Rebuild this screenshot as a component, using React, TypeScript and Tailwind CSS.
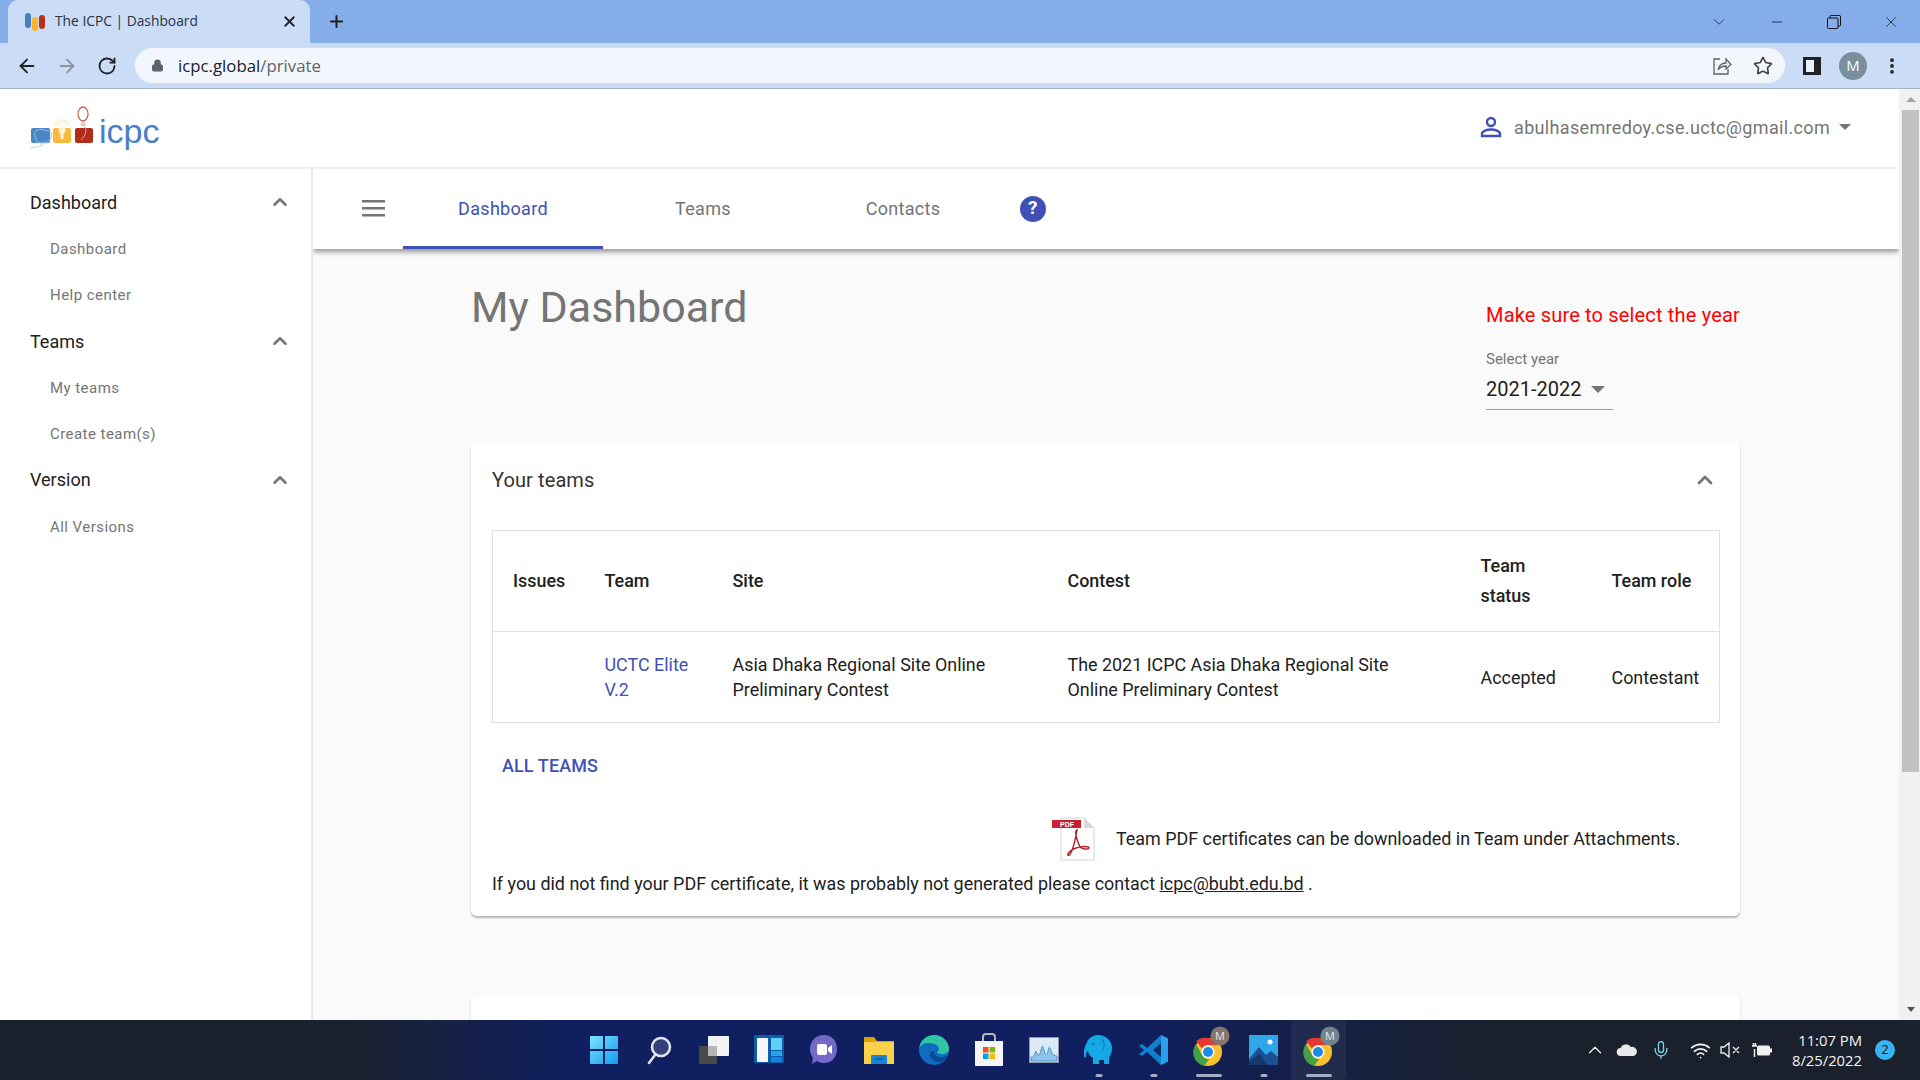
import { ChevronUp, Star, ArrowLeft, ArrowRight, RotateCw, Plus, X, Lock, Minus, EllipsisVertical, ChevronDown, Mic, Wifi } from 'lucide-react';

const sideGroups = [
  { title: 'Dashboard', items: ['Dashboard', 'Help center'] },
  { title: 'Teams', items: ['My teams', 'Create team(s)'] },
  { title: 'Version', items: ['All Versions'] },
];

function BrowserChrome() {
  return (
    <div className="shrink-0">
      <div className="h-[43px] bg-[#85ade9] flex items-end pl-2">
        <div className="w-[302px] h-[43px] mt-0 bg-[#cbdcf7] rounded-t-[10px] flex items-center pl-[16px] pr-[12px]">
          <svg width="22" height="20" viewBox="0 0 22 20" className="shrink-0">
            <rect x="1" y="1" width="6" height="15" rx="3" fill="#4a7fc4" />
            <rect x="8" y="5" width="6" height="14" rx="3" fill="#fbb72c" />
            <rect x="15" y="3" width="6" height="14" rx="3" fill="#b52f1c" />
          </svg>
          <span className="ml-[9px] font-['Open_Sans',sans-serif] text-[13.8px] text-[#2a3240] flex-1">The ICPC | Dashboard</span>
          <X size={17} strokeWidth={2.6} className="text-[#222]" />
        </div>
        <div className="w-[48px] h-[43px] flex items-center justify-center text-[#222] ml-[2px] -mr-[2px]">
          <Plus size={19} strokeWidth={2.6} />
        </div>
        <div className="flex-1" />
        <div className="h-[43px] w-[225px] flex items-center text-[#1a1a1a]">
          <div className="w-[58px] flex justify-center -ml-[5px]"><ChevronDown size={18} strokeWidth={1} /></div>
          <div className="w-[57px] flex justify-center"><Minus size={16} strokeWidth={1.2} /></div>
          <div className="w-[57px] flex justify-center">
            <svg width="14" height="14" viewBox="0 0 14 14" fill="none" stroke="#111" strokeWidth="1">
              <rect x="0.5" y="3" width="10.5" height="10.5" rx="1" />
              <path d="M3 3V1.5a1 1 0 0 1 1-1h8.5a1 1 0 0 1 1 1V10a1 1 0 0 1-1 1H11" />
            </svg>
          </div>
          <div className="w-[58px] flex justify-center"><X size={18} strokeWidth={1} /></div>
        </div>
      </div>
      <div className="h-[46px] bg-[#cbdcf7] border-b border-[#a3b3ca] flex items-center">
        <div className="w-[135px] shrink-0 flex items-center pl-[16px] gap-[18px] text-[#222]">
          <ArrowLeft size={22} strokeWidth={2} />
          <ArrowRight size={22} strokeWidth={2} className="text-[#8a93a0]" />
          <RotateCw size={20} strokeWidth={2.2} className="ml-[1px]" />
        </div>
        <div className="w-[1650px] h-[35px] rounded-full bg-[#f3f7fd] flex items-center pl-[16px]">
          <Lock size={13} fill="#5f6368" className="text-[#5f6368]" />
          <span className="ml-[14px] font-['Open_Sans',sans-serif] text-[16.8px] text-[#202124]">
            icpc.global<span className="text-[#5f6368]">/private</span>
          </span>
          <div className="flex-1" />
          <svg width="20" height="20" viewBox="0 0 20 20" fill="none" stroke="#5f6368" strokeWidth="1.3" className="mr-[21px]">
            <path d="M8 3H2v15h14v-5" />
            <path d="M6 14c1-5 4-7 8-7V3l5 5.500L14 13V10c-3 0-6 1-8 4z" />
          </svg>
          <Star size={20} strokeWidth={2} className="text-[#444] mr-[12px]" />
        </div>
        <div className="w-[55px] flex justify-center -ml-[1px]">
          <div className="w-[18px] h-[18px] border-[3px] border-[#202124] border-r-[7px] bg-[#e8f0fc]" />
        </div>
        <div className="w-[28px] h-[28px] rounded-full bg-[#78909c] text-white text-[15px] flex items-center justify-center font-['Open_Sans',sans-serif]">M</div>
        <div className="w-[50px] flex justify-center text-[#222]"><EllipsisVertical size={20} strokeWidth={2.6} /></div>
      </div>
    </div>
  );
}

function Logo() {
  return (
    <div className="flex items-end">
      <svg width="70" height="50" viewBox="0 0 70 50">
        <rect x="1" y="27" width="19" height="15" rx="2" fill="#4c86c6" />
        <path d="M6 30c4-3 10-1 15 1 2 4-1 9-5 10-4 2-10 1-10-3-2-3-2-6 0-8z" fill="none" stroke="#9cc0e2" strokeWidth="1" />
        <path d="M1 47c6-1 11-2 14-5" fill="none" stroke="#9cc0e2" strokeWidth="1" strokeDasharray="2 1" />
        <rect x="23" y="27" width="18" height="15" rx="2" fill="#fbb93a" />
        <path d="M29 31a3.500 3.500 0 1 1 6 0l-1.500 3v4h-3v-4z" fill="#fff4d0" />
        <path d="M24 21l3 3M32 18v4M40 21l-3 3M28 19l2 3M36 19l-2 3" stroke="#fbdc91" strokeWidth="1" />
        <rect x="45" y="27" width="18" height="15" rx="2" fill="#b32d1d" />
        <ellipse cx="53" cy="13" rx="5" ry="7" fill="none" stroke="#c9685b" strokeWidth="1.300" />
        <path d="M53 20l-2 4h4l-2-4zM53 24c5 4 3 10-2 15" fill="none" stroke="#e3a49a" strokeWidth="1" />
      </svg>
      <span className="font-['Liberation_Sans',sans-serif] text-[34px] leading-[38px] text-[#4a7ec9] -ml-[1px] mb-[1px]">icpc</span>
    </div>
  );
}

function Sidebar() {
  return (
    <aside className="w-[313px] shrink-0 bg-white border-r-2 border-[#e8e8e8] pt-[10px] pl-[30px] pr-[20px]">
      {sideGroups.map((g) => (
        <div key={g.title}>
          <div className="h-[46.3px] flex items-center justify-between text-[18px] text-[#212121]">
            {g.title}
            <ChevronUp size={22} strokeWidth={2.8} className="text-[#757575]" />
          </div>
          {g.items.map((i) => (
            <div key={i} className="h-[46.3px] flex items-center pl-[20px] pt-[2px] text-[15px] tracking-[0.45px] text-[#757575]">{i}</div>
          ))}
        </div>
      ))}
    </aside>
  );
}

function NavTabs() {
  return (
    <div className="h-[80px] shrink-0 bg-white shadow-[0_3px_5px_rgba(0,0,0,0.4)] flex items-stretch relative tracking-[0.3px]">
      <div className="w-[90px] flex items-center justify-center pl-[30px] pb-[2px]">
        <svg width="23" height="18" viewBox="0 0 23 18" fill="#757575">
          <rect y="1" width="23" height="2.500" />
          <rect y="8" width="23" height="2.500" />
          <rect y="15" width="23" height="2.500" />
        </svg>
      </div>
      <div className="w-[200px] flex items-center justify-center pt-[1px] text-[18px] text-[#3f51b5] border-b-[3px] border-[#3f51b5]">Dashboard</div>
      <div className="w-[200px] flex items-center justify-center text-[18px] text-[#757575] pb-[2px]">Teams</div>
      <div className="w-[200px] flex items-center justify-center text-[18px] text-[#757575] pb-[2px]">Contacts</div>
      <div className="w-[30px] ml-[15px] flex items-center justify-center pb-[1px]">
        <div className="w-[26px] h-[26px] rounded-full bg-[#3f51b5] text-white font-bold text-[19px] flex items-center justify-center">?</div>
      </div>
    </div>
  );
}

function TeamsCard() {
  const th = 'text-left font-medium text-[#212121] leading-[30px] pl-[20px] pr-[21px] border-b border-[#e0e0e0]';
  const td = 'text-left align-middle leading-[25px] pl-[20px] pr-[21px]';
  return (
    <section className="bg-white rounded-[6px] shadow-[0_2px_2px_rgba(0,0,0,0.28)] h-[475px] pt-[17px] pl-[21px] pr-[20px] text-[17.92px]">
      <div className="h-[44px] flex items-center justify-between text-[20px] tracking-[0.1px] text-[#333]">
        Your teams
        <ChevronUp size={24} strokeWidth={2.8} className="text-[#757575] mr-[3px]" />
      </div>
      <table className="mt-[28px] w-full table-fixed border border-[#e0e0e0]">
        <thead>
          <tr className="h-[101px]">
            <th className={`${th} w-[92px]`}>Issues</th>
            <th className={`${th} w-[128px]`}>Team</th>
            <th className={`${th} w-[335px]`}>Site</th>
            <th className={`${th} w-[413px]`}>Contest</th>
            <th className={`${th} w-[131px]`}>Team status</th>
            <th className={`${th}`}>Team role</th>
          </tr>
        </thead>
        <tbody className="text-[#212121]">
          <tr className="h-[91px]">
            <td className={td}></td>
            <td className={`${td} text-[#3f51b5]`}>UCTC Elite V.2</td>
            <td className={td}>Asia Dhaka Regional Site Online Preliminary Contest</td>
            <td className={td}>The 2021 ICPC Asia Dhaka Regional Site Online Preliminary Contest</td>
            <td className={td}>Accepted</td>
            <td className={`${td} pr-0`}>Contestant</td>
          </tr>
        </tbody>
      </table>
      <div className="mt-[29px] ml-[10px] font-medium tracking-[0.15px] leading-[28px] text-[#3f51b5]">ALL TEAMS</div>
      <div className="mt-[37px] ml-[560px] flex items-center">
        <svg width="44" height="44" viewBox="0 0 44 44" className="shrink-0">
          <path d="M9 1h23l10 10v32H9z" fill="#fff" stroke="#d5d5d5" />
          <path d="M32 1v10h10z" fill="#d9d9d9" />
          <rect x="0" y="3" width="29" height="8" fill="#c8202f" />
          <text x="15" y="10" textAnchor="middle" fontSize="7" fontWeight="700" fill="#fff" fontFamily="Liberation Sans, sans-serif">PDF</text>
          <path d="M25 13c-3 1 0 11 3 17 2 2 8 3 9 1 0-2-7-2-13 0-5 2-9 5-8 7 2 2 6-7 9-25z" fill="none" stroke="#b5212c" strokeWidth="1.500" />
        </svg>
        <span className="ml-[20px] text-[#212121]">Team PDF certificates can be downloaded in Team under Attachments.</span>
      </div>
      <p className="mt-[10px] leading-[25px] text-[#212121]">
        If you did not find your PDF certificate, it was probably not generated please contact <a className="underline">icpc@bubt.edu.bd</a> .
      </p>
    </section>
  );
}

function Scrollbar() {
  return (
    <div className="w-[21px] shrink-0 bg-[#f1f1f1] flex flex-col items-center pl-[2px]">
      <div className="h-[21px] flex items-center justify-center">
        <div className="w-0 h-0 border-x-[5px] border-x-transparent border-b-[5px] border-b-[#a3a3a3]" />
      </div>
      <div className="w-[17px] h-[662px] bg-[#c1c1c1]" />
      <div className="flex-1" />
      <div className="h-[21px] flex items-center justify-center">
        <div className="w-0 h-0 border-x-[4px] border-x-transparent border-t-[5px] border-t-[#505050]" />
      </div>
    </div>
  );
}

function Chrome({ badge }: { badge: string }) {
  return (
    <svg width="40" height="44" viewBox="0 0 40 44">
      <circle cx="17" cy="26" r="14" fill="#fbc02d" />
      <path d="M17 12a14 14 0 0 1 12.100 7H17a7 7 0 0 0-6 3.500L5 15a14 14 0 0 1 12-3z" fill="#e53935" />
      <path d="M5 18l6.500 11.500a7 7 0 0 0 7 3.300L13 40A14 14 0 0 1 5 18z" fill="#43a047" />
      <circle cx="17" cy="26" r="6.500" fill="#fff" />
      <circle cx="17" cy="26" r="5" fill="#1e88e5" />
      <circle cx="29" cy="10" r="9.500" fill={badge} />
      <text x="29" y="14" textAnchor="middle" fontSize="11" fill="#e8e8e8" fontFamily="Open Sans, sans-serif">M</text>
    </svg>
  );
}

const taskIcons = [
  <svg key="win" width="30" height="30" viewBox="0 0 30 30">
    <defs>
      <linearGradient id="win" x1="0" y1="0" x2="1" y2="1"><stop offset="0" stopColor="#7ee3ff" /><stop offset="1" stopColor="#0f9bf0" /></linearGradient>
    </defs>
    <path d="M1 2a1 1 0 0 1 1-1h12v13H1zM16 1h12a1 1 0 0 1 1 1v12H16zM1 16h13v13H2a1 1 0 0 1-1-1zM16 16h13v12a1 1 0 0 1-1 1H16z" fill="url(#win)" />
  </svg>,
  <svg key="search" width="30" height="30" viewBox="0 0 30 30">
    <circle cx="17" cy="12" r="9" fill="#33407a" stroke="#e4e6ee" strokeWidth="2.500" />
    <path d="M11 20l-6 8" stroke="#e4e6ee" strokeWidth="2.500" strokeLinecap="round" />
  </svg>,
  <svg key="tv" width="32" height="30" viewBox="0 0 32 30">
    <rect x="1" y="11" width="18" height="18" rx="1" fill="#4a4a4a" />
    <rect x="10" y="1" width="21" height="20" rx="1" fill="#f2f2f4" />
    <rect x="10" y="11" width="9" height="10" fill="#b5b5b8" />
  </svg>,
  <svg key="widgets" width="30" height="30" viewBox="0 0 30 30">
    <rect width="30" height="28" rx="1" fill="#0f5ca8" />
    <rect x="3" y="3" width="11" height="24" rx="1" fill="#f4f7fa" />
    <rect x="17" y="3" width="11" height="12" fill="#5cd0f7" />
    <rect x="17" y="16" width="11" height="5" fill="#27a3ee" />
    <rect x="17" y="22" width="11" height="5" fill="#0f84e0" />
  </svg>,
  <svg key="chat" width="30" height="32" viewBox="0 0 30 32">
    <path d="M15 1c8 0 13 6 13 14s-5 14-13 14c-3 0-5-.5-7-2l-5 3 1-6C2 21 1 18 1 15 1 7 7 1 15 1z" fill="#7468c9" />
    <rect x="8" y="10" width="10" height="11" rx="2" fill="#fff" />
    <path d="M19 14l4-3v9l-4-3z" fill="#fff" />
  </svg>,
  <svg key="explorer" width="32" height="30" viewBox="0 0 32 30">
    <path d="M1 3a1 1 0 0 1 1-1h9l3 4h17v4H1z" fill="#e0a100" />
    <rect x="1" y="7" width="30" height="22" fill="#fbd04b" />
    <rect x="8" y="20" width="16" height="9" rx="1" fill="#1685d9" />
    <rect x="12" y="23" width="8" height="1.500" fill="#0b5a9e" />
  </svg>,
  <svg key="edge" width="32" height="32" viewBox="0 0 32 32">
    <circle cx="16" cy="16" r="15" fill="#0f6cc0" />
    <path d="M1 15C2 6 9 1 16 1c9 0 15 7 15 14 0 3-3 5-7 5-3 0-5-1-5-2 3-1 3-6-2-8C10 8 3 9 1 15z" fill="#2fc6a5" />
    <path d="M12 20c0 5 5 9 11 8 3-1 6-4 7-7-3 2-8 3-12 1-2-1-2-3-1-5-3 0-5 1-5 3z" fill="#0a4a94" />
  </svg>,
  <svg key="store" width="30" height="34" viewBox="0 0 30 34">
    <path d="M9 8V4a3 3 0 0 1 3-3h6a3 3 0 0 1 3 3v4" fill="none" stroke="#b8b8b8" strokeWidth="2" />
    <path d="M1 8h28v24a1 1 0 0 1-1 1H2a1 1 0 0 1-1-1z" fill="#f5f5f5" />
    <rect x="9" y="14" width="5.500" height="5.500" fill="#f25022" />
    <rect x="15.500" y="14" width="5.500" height="5.500" fill="#7fba00" />
    <rect x="9" y="20.500" width="5.500" height="5.500" fill="#00a4ef" />
    <rect x="15.500" y="20.500" width="5.500" height="5.500" fill="#ffb900" />
  </svg>,
  <svg key="monitor" width="30" height="26" viewBox="0 0 30 26">
    <rect x="0.500" y="0.500" width="29" height="25" fill="#dbeaf6" stroke="#8d96a5" />
    <path d="M2 20c3 0 3-2 5-6 2 6 3 6 5-1 1-5 2-5 3 0 1 6 3 5 4 1 1-5 2-5 3 0 1 3 3 5 6 5v5H2z" fill="#8cc3ea" stroke="#3a86c4" strokeWidth="0.800" />
  </svg>,
  <svg key="elephant" width="30" height="32" viewBox="0 0 30 32">
    <path d="M14 1c8 0 14 6 14 13 0 5-2 8-3 10v6h-5v-4h-5v4H9v-6c-2-1-5-4-5-7-2 1-2 3-2 5 0 1-1 2-2 1-1-6 1-11 3-15C5 4 9 1 14 1z" fill="#14a8e5" />
    <circle cx="9" cy="10" r="1" fill="#06587f" />
    <path d="M18 5c3 3 3 8 0 12" fill="none" stroke="#0d7fb5" strokeWidth="1.200" />
  </svg>,
  <svg key="vscode" width="30" height="32" viewBox="0 0 30 32">
    <path d="M22 1l7 3.500v23L22 31 8 18l-5 4-3-2 5-4-5-4 3-2 5 4z" fill="#0f7fd0" />
    <path d="M22 1l7 3.500v23L22 31z" fill="#28a0ea" />
    <path d="M22 9l-8 7 8 7z" fill="#0b1b56" opacity="0.850" />
  </svg>,
  <Chrome key="chrome1" badge="#86756a" />,
  <svg key="photos" width="30" height="32" viewBox="0 0 30 32">
    <rect y="1" width="29" height="30" fill="#2ea6e8" />
    <circle cx="21" cy="8" r="2.500" fill="#fff" />
    <path d="M0 25l10-12 7 8 5-4 7 6v8H0z" fill="#1d4f94" />
    <path d="M0 31v-3l10-8 9 11z" fill="#16386f" />
  </svg>,
  <Chrome key="chrome2" badge="#71848c" />,
];

function Taskbar() {
  const running = [9, 10, 11, 12, 13];
  return (
    <div className="h-[60px] shrink-0 bg-[linear-gradient(90deg,#1a212d_0%,#1a212d_18%,#0f1f60_30%,#0f1f60_58%,#1a212d_78%,#1a212d_100%)] grid grid-cols-[1fr_auto_1fr] items-center">
      <div />
      <div className="flex ml-[2px] h-[60px]">
        {taskIcons.map((icon, i) => (
          <div key={i} className={`w-[55px] h-[60px] flex items-center justify-center relative ${i === 13 ? 'bg-white/5 rounded-[4px]' : ''}`}>
            <div className={i === 11 || i === 13 ? 'ml-[4px] -mt-[5px]' : '-mt-[1px]'}>{icon}</div>
            {running.includes(i) && (
              <div className={`absolute bottom-[3px] left-1/2 -translate-x-1/2 h-[3.500px] rounded-full bg-[#a5adc2] ${i === 11 || i === 13 ? 'w-[26px]' : 'w-[7px]'}`} />
            )}
          </div>
        ))}
      </div>
      <div className="flex items-center justify-end pr-[25px] text-[#f5f5f5]">
        <ChevronUp size={22} strokeWidth={1.3} className="mr-[10px]" />
        <svg width="22" height="14" viewBox="0 0 22 14" className="mr-[13px]">
          <path d="M5 13a4 4 0 0 1-.5-8A6 6 0 0 1 15 4a4.500 4.500 0 0 1 2.500 9z" fill="#e8e8e8" />
        </svg>
        <Mic size={20} strokeWidth={1.6} className="text-[#7fd0ea] mr-[19px]" />
        <Wifi size={21} strokeWidth={2} className="mr-[9px]" />
        <svg width="22" height="16" viewBox="0 0 22 16" fill="none" stroke="#f0f0f0" strokeWidth="1.300" className="mr-[9px]">
          <path d="M1 5h3l5-4v14l-5-4H1zM13 5l6 6M19 5l-6 6" />
        </svg>
        <svg width="22" height="16" viewBox="0 0 22 16" className="mr-[19px]">
          <rect x="6" y="3.500" width="13" height="10" rx="1.500" fill="#f0f0f0" />
          <rect x="19" y="6.500" width="2" height="4" fill="#f0f0f0" />
          <path d="M1 4h5M2.500 1v3M4.500 1v3M3.500 7v8" stroke="#f0f0f0" strokeWidth="1.500" />
        </svg>
        <div className="font-['Open_Sans',sans-serif] text-[14.8px] leading-[20px] text-right mr-[13px]">
          <div>11:07 PM</div>
          <div>8/25/2022</div>
        </div>
        <div className="w-[20px] h-[20px] rounded-full bg-[#38b4f4] text-[#111] text-[13px] flex items-center justify-center font-['Open_Sans',sans-serif]">2</div>
      </div>
    </div>
  );
}

export default function App() {
  return (
    <div className="w-[1920px] h-[1080px] flex flex-col overflow-hidden bg-white font-['Roboto',sans-serif]">
      <BrowserChrome />
      <div className="flex-1 min-h-0 flex">
        <div className="flex-1 min-w-0 flex flex-col">
          <header className="h-[80px] shrink-0 bg-white border-b-2 border-[#eeeeee] flex items-center justify-between pl-[30px] pr-[48px]">
            <div className="-mt-[4px]"><Logo /></div>
            <div className="flex items-center text-[18px] tracking-[0.33px] text-[#757575] -mt-[2px]">
              <svg width="22" height="22" viewBox="0 0 22 22" fill="none" stroke="#3f51b5" strokeWidth="2.400" className="mr-[12px]">
                <circle cx="11" cy="6" r="4" />
                <path d="M2 20v-2c0-3 5-4.500 9-4.500s9 1.500 9 4.500v2z" />
              </svg>
              abulhasemredoy.cse.uctc@gmail.com
              <div className="ml-[9px] w-0 h-0 border-x-[6px] border-x-transparent border-t-[6px] border-t-[#757575]" />
            </div>
          </header>
          <div className="flex-1 min-h-0 flex">
            <Sidebar />
            <main className="flex-1 min-w-0 bg-[#fafafa] flex flex-col overflow-hidden">
              <NavTabs />
              <div className="w-[1269px] ml-[158px]">
                <div className="flex justify-between items-start h-[192px]">
                  <h1 className="mt-[33px] text-[43px] leading-[50px] text-[#757575]">My Dashboard</h1>
                  <div className="w-[254px] mt-[53px]">
                    <div className="text-[20px] leading-[26px] tracking-[0.17px] text-[#ff0000]">Make sure to select the year</div>
                    <div className="mt-[22px] text-[15px] leading-[18px] text-[#757575]">Select year</div>
                    <div className="mt-[3px] w-[127px] h-[39px] border-b-[1.5px] border-[#9e9e9e] flex items-center justify-between pr-[8px] pb-[3px] text-[20px] text-[#212121]">
                      2021-2022
                      <div className="w-0 h-0 mt-[2px] border-x-[7px] border-x-transparent border-t-[7px] border-t-[#757575]" />
                    </div>
                  </div>
                </div>
                <TeamsCard />
                <div className="mt-[79px] h-[60px] bg-white rounded-[6px] shadow-[0_1px_3px_rgba(0,0,0,0.15)]" />
              </div>
            </main>
          </div>
        </div>
        <Scrollbar />
      </div>
      <Taskbar />
    </div>
  );
}
